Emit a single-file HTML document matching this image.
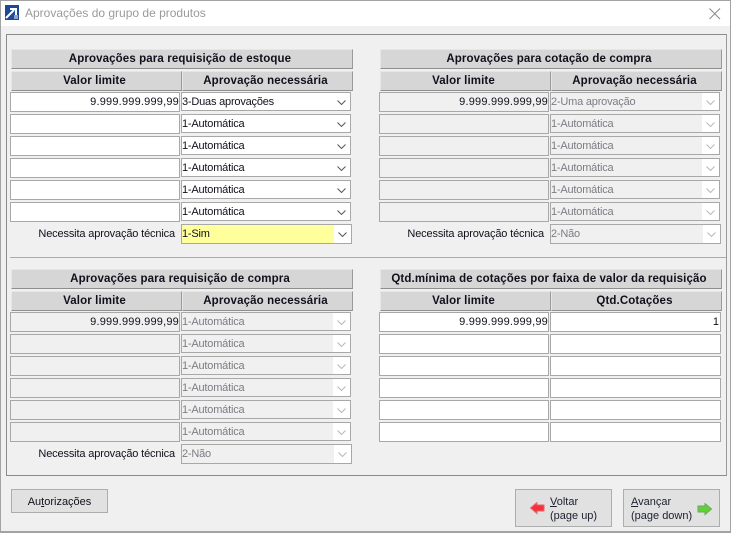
<!DOCTYPE html>
<html><head><meta charset="utf-8">
<style>
html,body{margin:0;padding:0;width:731px;height:533px;overflow:hidden;background:#f0f0f0}
body{font-family:"Liberation Sans","DejaVu Sans",sans-serif;font-size:11px;color:#10101c;position:relative}
div,svg{position:absolute;box-sizing:border-box;white-space:nowrap}
.g{width:342px;height:230px}
.h{background:#d6d6d6;border-top:1px solid #e6e6e6;border-bottom:1px solid #8e8e8e;border-left:1px solid #e6e6e6;border-right:1px solid #9a9a9a;font-weight:bold;text-align:center;line-height:19px;height:20px;font-size:11.5px;letter-spacing:.12px;padding-right:4px}
.i{left:-1px;width:170px;height:20px;background:#fff;border:1px solid #a8a8a8;text-align:right;line-height:18px;padding-right:0;letter-spacing:.2px}
.c{left:170px;width:170px;height:19px;background:#fff;border:1px solid #a8a8a8;line-height:19px;padding-left:0;letter-spacing:-.2px}
.q{left:170px;width:171px;height:20px;background:#fff;border:1px solid #a8a8a8;text-align:right;line-height:18px;padding-right:1px}
.d{background:#f0f0f0;color:#7c7c84}
.i.d{color:#10101c}
.a{right:0;top:0;bottom:0;width:17px;background:#fff}
.a svg{left:4px;top:7px}
.l{width:170px;left:-6px;text-align:right;line-height:19px;top:176px;letter-spacing:-.15px}
.n{width:171px;height:20px}
.b{background:#e1e1e1;border:1px solid #adadad}
u{text-decoration:underline}
</style></head><body>

<!-- window -->
<div style="left:0;top:0;width:731px;height:533px;border:1px solid #a3a3a3;border-bottom:2px solid #a3a3a3"></div>
<div style="left:1px;top:1px;width:729px;height:25px;background:#fff"></div>
<svg style="left:5px;top:5px" width="14" height="15" viewBox="0 0 14 15"><rect width="14" height="15" fill="#1c4a94"/><path d="M1 13L9 5M5 4h6v6" stroke="#fff" stroke-width="2" fill="none"/><rect x="9" y="10" width="4" height="4" fill="#8aa4cc"/></svg>
<div style="left:25px;top:6px;font-size:12px;color:#9a9a9a;line-height:14px">Aprovações do grupo de produtos</div>
<svg style="left:709px;top:8px" width="12" height="12" viewBox="0 0 12 12"><path d="M.5 .5L11 11M11 .5L.5 11" stroke="#8a8a8a" stroke-width="1" fill="none"/></svg>

<!-- frame -->
<div style="left:6px;top:34px;width:721px;height:442px;border:1px solid #8a8a8a;border-right:1px solid #9a9a9a;border-bottom:1px solid #8a8a8a"></div>
<div style="left:10px;top:257px;width:716px;height:1px;background:#ababab"></div>

<!-- group 1 -->
<div class="g" style="left:11px;top:49px">
<div class="h" style="left:0;top:0;width:342px">Aprovações para requisição de estoque</div>
<div class="h" style="left:0;top:22px;width:171px">Valor limite</div>
<div class="h" style="left:171px;top:22px;width:171px">Aprovação necessária</div>
<div class="i" style="top:43px">9.999.999.999,99</div>
<div class="i" style="top:65px"></div><div class="i" style="top:87px"></div><div class="i" style="top:109px"></div><div class="i" style="top:131px"></div><div class="i" style="top:153px"></div>
<div class="c" style="top:43px">3-Duas aprovações<div class="a"><svg width="9" height="5"><path d="M.5 .5L4.5 4.5L8.5 .5" stroke="#555" fill="none"/></svg></div></div>
<div class="c" style="top:65px">1-Automática<div class="a"><svg width="9" height="5"><path d="M.5 .5L4.5 4.5L8.5 .5" stroke="#555" fill="none"/></svg></div></div>
<div class="c" style="top:87px">1-Automática<div class="a"><svg width="9" height="5"><path d="M.5 .5L4.5 4.5L8.5 .5" stroke="#555" fill="none"/></svg></div></div>
<div class="c" style="top:109px">1-Automática<div class="a"><svg width="9" height="5"><path d="M.5 .5L4.5 4.5L8.5 .5" stroke="#555" fill="none"/></svg></div></div>
<div class="c" style="top:131px">1-Automática<div class="a"><svg width="9" height="5"><path d="M.5 .5L4.5 4.5L8.5 .5" stroke="#555" fill="none"/></svg></div></div>
<div class="c" style="top:153px">1-Automática<div class="a"><svg width="9" height="5"><path d="M.5 .5L4.5 4.5L8.5 .5" stroke="#555" fill="none"/></svg></div></div>
<div class="l">Necessita aprovação técnica</div>
<div class="c n" style="top:175px;background:#ffff9c;color:#10101c">1-Sim<div class="a"><svg width="9" height="5"><path d="M.5 .5L4.5 4.5L8.5 .5" stroke="#555" fill="none"/></svg></div></div>
</div>

<!-- group 2 -->
<div class="g" style="left:380px;top:49px">
<div class="h" style="left:0;top:0;width:342px">Aprovações para cotação de compra</div>
<div class="h" style="left:0;top:22px;width:171px">Valor limite</div>
<div class="h" style="left:171px;top:22px;width:171px">Aprovação necessária</div>
<div class="i d" style="top:43px">9.999.999.999,99</div>
<div class="i d" style="top:65px"></div><div class="i d" style="top:87px"></div><div class="i d" style="top:109px"></div><div class="i d" style="top:131px"></div><div class="i d" style="top:153px"></div>
<div class="c d" style="top:43px">2-Uma aprovação<div class="a"><svg width="9" height="5"><path d="M.5 .5L4.5 4.5L8.5 .5" stroke="#b8b8b8" fill="none"/></svg></div></div>
<div class="c d" style="top:65px">1-Automática<div class="a"><svg width="9" height="5"><path d="M.5 .5L4.5 4.5L8.5 .5" stroke="#b8b8b8" fill="none"/></svg></div></div>
<div class="c d" style="top:87px">1-Automática<div class="a"><svg width="9" height="5"><path d="M.5 .5L4.5 4.5L8.5 .5" stroke="#b8b8b8" fill="none"/></svg></div></div>
<div class="c d" style="top:109px">1-Automática<div class="a"><svg width="9" height="5"><path d="M.5 .5L4.5 4.5L8.5 .5" stroke="#b8b8b8" fill="none"/></svg></div></div>
<div class="c d" style="top:131px">1-Automática<div class="a"><svg width="9" height="5"><path d="M.5 .5L4.5 4.5L8.5 .5" stroke="#b8b8b8" fill="none"/></svg></div></div>
<div class="c d" style="top:153px">1-Automática<div class="a"><svg width="9" height="5"><path d="M.5 .5L4.5 4.5L8.5 .5" stroke="#b8b8b8" fill="none"/></svg></div></div>
<div class="l">Necessita aprovação técnica</div>
<div class="c n d" style="top:175px">2-Não<div class="a"><svg width="9" height="5"><path d="M.5 .5L4.5 4.5L8.5 .5" stroke="#b8b8b8" fill="none"/></svg></div></div>
</div>

<!-- group 3 -->
<div class="g" style="left:11px;top:269px">
<div class="h" style="left:0;top:0;width:342px">Aprovações para requisição de compra</div>
<div class="h" style="left:0;top:22px;width:171px">Valor limite</div>
<div class="h" style="left:171px;top:22px;width:171px">Aprovação necessária</div>
<div class="i d" style="top:43px">9.999.999.999,99</div>
<div class="i d" style="top:65px"></div><div class="i d" style="top:87px"></div><div class="i d" style="top:109px"></div><div class="i d" style="top:131px"></div><div class="i d" style="top:153px"></div>
<div class="c d" style="top:43px">1-Automática<div class="a"><svg width="9" height="5"><path d="M.5 .5L4.5 4.5L8.5 .5" stroke="#b8b8b8" fill="none"/></svg></div></div>
<div class="c d" style="top:65px">1-Automática<div class="a"><svg width="9" height="5"><path d="M.5 .5L4.5 4.5L8.5 .5" stroke="#b8b8b8" fill="none"/></svg></div></div>
<div class="c d" style="top:87px">1-Automática<div class="a"><svg width="9" height="5"><path d="M.5 .5L4.5 4.5L8.5 .5" stroke="#b8b8b8" fill="none"/></svg></div></div>
<div class="c d" style="top:109px">1-Automática<div class="a"><svg width="9" height="5"><path d="M.5 .5L4.5 4.5L8.5 .5" stroke="#b8b8b8" fill="none"/></svg></div></div>
<div class="c d" style="top:131px">1-Automática<div class="a"><svg width="9" height="5"><path d="M.5 .5L4.5 4.5L8.5 .5" stroke="#b8b8b8" fill="none"/></svg></div></div>
<div class="c d" style="top:153px">1-Automática<div class="a"><svg width="9" height="5"><path d="M.5 .5L4.5 4.5L8.5 .5" stroke="#b8b8b8" fill="none"/></svg></div></div>
<div class="l">Necessita aprovação técnica</div>
<div class="c n d" style="top:175px">2-Não<div class="a"><svg width="9" height="5"><path d="M.5 .5L4.5 4.5L8.5 .5" stroke="#b8b8b8" fill="none"/></svg></div></div>
</div>

<!-- group 4 -->
<div class="g" style="left:380px;top:269px">
<div class="h" style="left:0;top:0;width:342px">Qtd.mínima de cotações por faixa de valor da requisição</div>
<div class="h" style="left:0;top:22px;width:171px">Valor limite</div>
<div class="h" style="left:171px;top:22px;width:171px">Qtd.Cotações</div>
<div class="i" style="top:43px">9.999.999.999,99</div>
<div class="i" style="top:65px"></div><div class="i" style="top:87px"></div><div class="i" style="top:109px"></div><div class="i" style="top:131px"></div><div class="i" style="top:153px"></div>
<div class="q" style="top:43px">1</div>
<div class="q" style="top:65px"></div><div class="q" style="top:87px"></div><div class="q" style="top:109px"></div><div class="q" style="top:131px"></div><div class="q" style="top:153px"></div>
</div>

<!-- buttons -->
<div class="b" style="left:11px;top:489px;width:97px;height:24px;text-align:center;line-height:25px">Au<u>t</u>orizações</div>

<div class="b" style="left:515px;top:489px;width:97px;height:38px">
<svg style="left:14px;top:12px" width="15" height="13" viewBox="0 0 15 13"><path d="M7 .5L.5 6L7 11.5V9H14V3H7Z" fill="#f52f3c" stroke="#e8686c" stroke-width="1"/></svg>
<div style="left:34px;top:5px;line-height:14px;color:#1c2030"><u>V</u>oltar<br>(page up)</div>
</div>

<div class="b" style="left:623px;top:489px;width:97px;height:38px">
<svg style="left:73px;top:13px" width="15" height="13" viewBox="0 0 15 13"><path d="M8 .5L14.5 6L8 11.5V9H1V3H8Z" fill="#5fd038" stroke="#6aa85a" stroke-width="1"/></svg>
<div style="left:7px;top:5px;line-height:14px;color:#1c2030"><u>A</u>vançar<br>(page down)</div>
</div>

</body></html>
